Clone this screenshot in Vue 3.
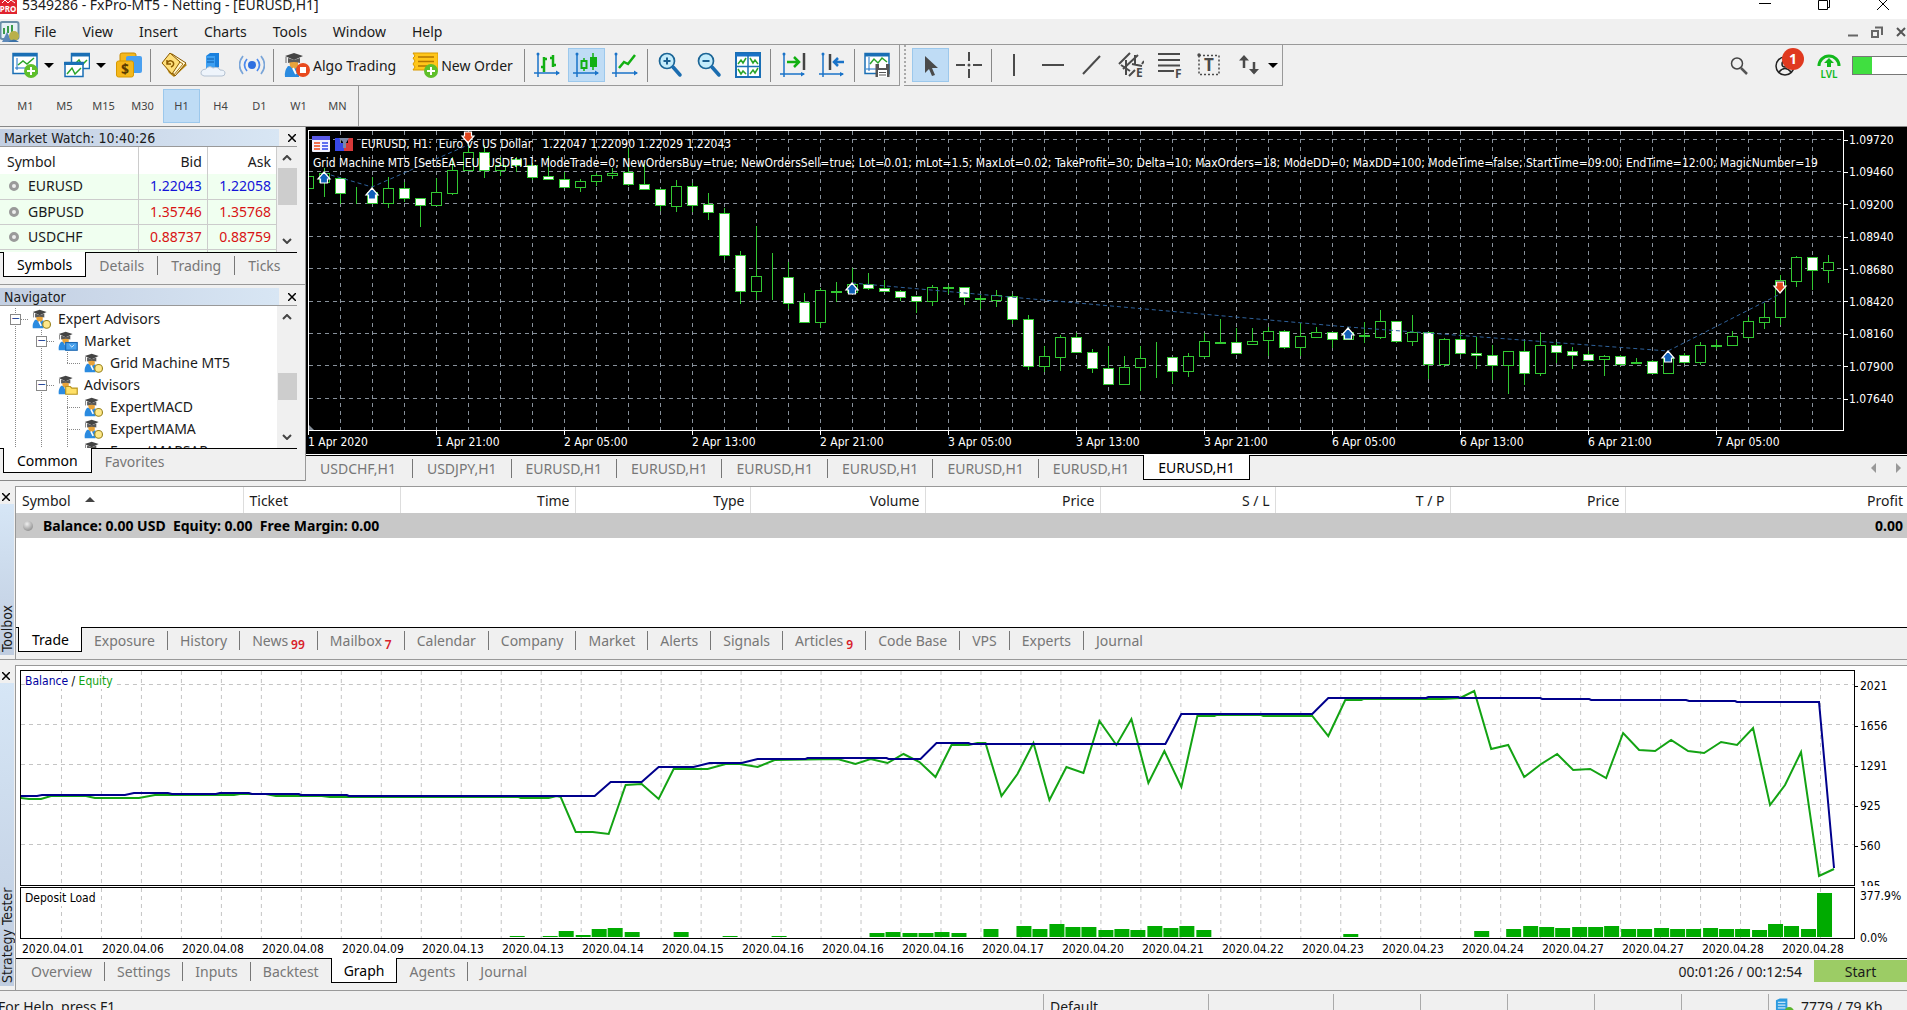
<script setup>
const menus = ['File', 'View', 'Insert', 'Charts', 'Tools', 'Window', 'Help']
const frames = ['M1', 'M5', 'M15', 'M30', 'H1', 'H4', 'D1', 'W1', 'MN']

const axes = '<path d="M4 1v24M0 21h25" stroke="#1a73c8" stroke-width="1.5"/><circle cx="4" cy="2" r="1.5" fill="#1a73c8"/><path d="M22 18.500l4 2.500-4 2.500z" fill="#1a73c8"/>'
const hat = '<path d="M4 14q-4 5-3 11h14V15z" fill="#2b8be0"/><path d="M5 8h9v6q-4 6-8 0z" fill="#e8a33a"/><path d="M1 4l9-3 9 3-9 4z" fill="#444"/><path d="M4 6v5q6-2 12 0V6l-6 2z" fill="#5a5a5a"/><path d="M2 5v6" stroke="#666"/><path d="M9 16l3 6" stroke="#fff" stroke-width="2"/>'
const plus = '<circle cx="19" cy="19" r="7" fill="#5fbf2a"/><path d="M19 15v8M15 19h8" stroke="#fff" stroke-width="2"/>'
const chartBox = '<path d="M1 1.500h24v20H1z" fill="#fff" stroke="#1a6fb5" stroke-width="1.500"/><path d="M1 3h24" stroke="#1a6fb5" stroke-width="3"/>'

const icons = {
  newChart: chartBox + '<path d="M5 6v12M3 16h16" stroke="#1a73c8"/><path d="M6 13l5-4 4 3 7-6" stroke="#2aa52a" stroke-width="1.500" fill="none"/>' + plus,
  windows: '<path d="M7.500 1.500h18v15h-18z" fill="#fff" stroke="#1a6fb5" stroke-width="1.500"/><path d="M7 3h19" stroke="#1a6fb5" stroke-width="3"/><path d="M10 13l5-5 3 5 5-5" stroke="#2aa52a" fill="none" stroke-width="1.500"/><path d="M1 10.500h18v14H1z" fill="#fff" stroke="#1a6fb5" stroke-width="1.500"/><path d="M0 11.500h20" stroke="#1a6fb5" stroke-width="3"/><path d="M3 22l5-6 3 6 6-6" stroke="#2aa52a" fill="none" stroke-width="1.500"/>',
  dollar: '<rect x="4" y="1" width="16" height="16" rx="2" fill="#f5b81c" stroke="#c98a00"/><rect x="10" y="4" width="16" height="17" rx="2" fill="#4aa0f0"/><rect x="0.500" y="9" width="17" height="16" rx="2" fill="#f5b81c" stroke="#d89a00"/><text x="9" y="22" font-size="14" font-weight="700" text-anchor="middle" fill="#5a3b00">$</text>',
  book: '<path d="M2 10L10 1l16 12-13 12L8 21z" fill="#b8860f"/><path d="M11 2l14 9-11 13-3-4z" fill="#fff6d0" stroke="#8a5a00"/><path d="M10 4l12 8-10 12" fill="none" stroke="#a87410"/><path d="M1 11L9 1l10 9-8 12z" fill="#ffdf7a" stroke="#8a5a00"/><path d="M6 11q3-4 6-1 2 3-2 5M6 8v4h4" fill="none" stroke="#8a5a00" stroke-width="1.500"/>',
  server: '<path d="M6 4l4-3h9v14l-4 3H6z" fill="#1a80dd"/><path d="M6 4h9v13H6z" fill="#3ea0f2"/><path d="M7 7h7M7 10h7" stroke="#0d5aa8"/><path d="M4 24q-4-1-3-4t5-3q3-4 7-1 5-2 7 2 5 0 5 3t-3 3z" fill="#eef4fb" stroke="#b4c2d2"/>',
  signal: '<circle cx="13" cy="13" r="4" fill="#2f6fe0"/><path d="M8 7q-5 6 0 12M18 7q5 6 0 12" fill="none" stroke="#4c8aee" stroke-width="1.700"/><path d="M4 4q-7 9 0 18M22 4q7 9 0 18" fill="none" stroke="#7aa5d8" stroke-width="1.700"/>',
  algo: hat + '<circle cx="19" cy="18" r="7" fill="#e8491d"/><rect x="16" y="15" width="6" height="6" fill="#fff"/>',
  order: '<path d="M1 1h25v17H1l2-3-2-3 2-3-2-3 2-2z" fill="#ffc61a" stroke="#d99a00"/><path d="M6 5h16M6 9.500h16M6 14h9" stroke="#b37500" stroke-width="1.500"/>' + plus,
  bars: axes + '<path d="M10 5v15M7 15h3M10 7h3M19 3v12M16 6h3M19 13h3" stroke="#12b012" stroke-width="2.500"/>',
  candles: axes + '<path d="M11 6v13M20 1v17" stroke="#12b012" stroke-width="1.500"/><rect x="8.500" y="9" width="5" height="7" fill="#bfdcf5" stroke="#12b012" stroke-width="2"/><rect x="17" y="5" width="7" height="10" fill="#12b012"/>',
  line: axes + '<path d="M7 16l5-6 4 2 7-9" fill="none" stroke="#12b012" stroke-width="2.500"/>',
  zoomIn: '<circle cx="10" cy="9" r="7.500" fill="#c4ecfb" stroke="#1b6596" stroke-width="1.700"/><path d="M10 5.500v7M6.500 9h7" stroke="#1b5f90" stroke-width="2"/><path d="M16 15l7 8" stroke="#1b6db0" stroke-width="3.500" stroke-linecap="round"/>',
  zoomOut: '<circle cx="10" cy="9" r="7.500" fill="#c4ecfb" stroke="#1b6596" stroke-width="1.700"/><path d="M6.500 9h7" stroke="#1b5f90" stroke-width="2"/><path d="M16 15l7 8" stroke="#1b6db0" stroke-width="3.500" stroke-linecap="round"/>',
  tile: '<path d="M1 1h24v24H1z" fill="#fff" stroke="#1a6fb5" stroke-width="2"/><path d="M1 3h24" stroke="#1a73c8" stroke-width="3"/><path d="M13 3v22M1 14.500h24" stroke="#1a6fb5" stroke-width="1.500"/><path d="M3 12l3-4 2 3 3-5M15 6l3 5 2-3 3 4M3 17l3 5 2-3 3 3M15 22l3-4 2 3 3-5" fill="none" stroke="#2aa52a" stroke-width="1.500"/>',
  scroll: '<path d="M4 1v24M0 22h24" stroke="#1a73c8" stroke-width="1.500"/><circle cx="4" cy="2" r="1.500" fill="#1a73c8"/><path d="M21 20l4 2-4 2.500z" fill="#1a73c8"/><path d="M24 1v17" stroke="#444" stroke-width="2.500"/><path d="M7 10h11M14 5l5 5-5 5" fill="none" stroke="#12b012" stroke-width="2.500"/>',
  shift: '<path d="M4 1v24M0 22h24" stroke="#1a73c8" stroke-width="1.500"/><circle cx="4" cy="2" r="1.500" fill="#1a73c8"/><path d="M21 20l4 2-4 2.500z" fill="#1a73c8"/><path d="M11 2v16" stroke="#444" stroke-width="2.500"/><path d="M25 10H16M19 6l-4 4 4 4" fill="none" stroke="#1a73c8" stroke-width="2.500"/>',
  template: chartBox + '<path d="M5 5v14M2 17h12" stroke="#1a73c8"/><path d="M6 12l4-5 4 4 4-5 5 4" fill="none" stroke="#2aa52a" stroke-width="1.500"/><path d="M11.500 12h14v13h-14z" fill="#555"/><path d="M15 12h7v4h-7z" fill="#fff"/><path d="M14 18h9v7h-9z" fill="#fff"/><path d="M15 20.500h7M15 23h7" stroke="#555"/>',
  cursor: '<path d="M8 4v17l4-4 3 7 3-1-3-7h6z" fill="#4a4a4a"/>',
  cross: '<path d="M13 0v9M13 17v9M0 13h9M17 13h9" stroke="#4a4a4a" stroke-width="2"/><circle cx="13" cy="13" r="1.500" fill="#4a4a4a"/>',
  vline: '<path d="M13 2v22" stroke="#4a4a4a" stroke-width="2"/>',
  hline: '<path d="M2 13h22" stroke="#4a4a4a" stroke-width="2"/>',
  trend: '<path d="M4 22L21 4" stroke="#4a4a4a" stroke-width="2"/>',
  channel: '<path d="M1 12L12 1M5 17L20 3M11 24l6-6M3 13l9 6M8 8v15M17 3v9M14 12l10 2M24 12l2-3" stroke="#4a4a4a" stroke-width="2" fill="none"/><text x="18" y="25" font-size="12" font-weight="700" fill="#4a4a4a">E</text>',
  fibo: '<path d="M1 2h22M1 8h22M1 13.500h22M1 19h16" stroke="#4a4a4a" stroke-width="2.200"/><text x="18" y="26" font-size="12" font-weight="700" fill="#4a4a4a">F</text>',
  label: '<path d="M3 3.500h20v19H3z" fill="none" stroke="#4a4a4a" stroke-width="1.500" stroke-dasharray="2 2"/><circle cx="3" cy="3" r="1.700" fill="#4a4a4a"/><text x="13" y="19" font-size="17" font-weight="700" text-anchor="middle" fill="#4a4a4a">T</text>',
  arrows: '<path d="M8 5v11M18 10v11" stroke="#4a4a4a" stroke-width="2.500"/><path d="M3 8.500l5-5.500 5 5.500zM13 17l5 5.500 5-5.500z" fill="#4a4a4a"/>',
  ea: hat + '<circle cx="19" cy="20" r="5" fill="#ffe98a" stroke="#9a8420" stroke-width="1.500"/>',
  market: hat + '<rect x="10" y="15" width="15" height="10" fill="#4aa3ee" stroke="#1a66b0" stroke-width="1.500"/><path d="M15 18l3 3 3-3" stroke="#fff" fill="none"/>',
  folder: hat + '<path d="M10 15h6l2 2h7v8H10z" fill="#ffe067" stroke="#b99520" stroke-width="1.500"/>'
}

const toolGroups = [
  [
    [{ n: 'newChart', drop: true, t: 'New chart' }, { n: 'windows', drop: true, t: 'Profiles' }, { n: 'dollar', t: 'Market watch' }],
    [{ n: 'book', t: 'Navigator' }, { n: 'server', t: 'VPS' }, { n: 'signal', t: 'Signals' }],
    [{ n: 'algo', text: 'Algo Trading' }, { n: 'order', text: 'New Order' }],
    [{ n: 'bars', t: 'Bars' }, { n: 'candles', on: true, t: 'Candles' }, { n: 'line', t: 'Line' }],
    [{ n: 'zoomIn', t: 'Zoom in' }, { n: 'zoomOut', t: 'Zoom out' }, { n: 'tile', t: 'Tile windows' }],
    [{ n: 'scroll', t: 'Auto scroll' }, { n: 'shift', t: 'Chart shift' }],
    [{ n: 'template', t: 'Templates' }]
  ],
  [
    [{ n: 'cursor', on: true, t: 'Cursor' }, { n: 'cross', t: 'Crosshair' }],
    [{ n: 'vline', t: 'Vertical line' }, { n: 'hline', t: 'Horizontal line' }, { n: 'trend', t: 'Trendline' }, { n: 'channel', t: 'Channel' }, { n: 'fibo', t: 'Fibonacci' }, { n: 'label', t: 'Text' }, { n: 'arrows', drop: true, t: 'Arrows' }]
  ]
]

const quotes = [
  { s: 'EURUSD', bid: '1.22043', ask: '1.22058', c: 'up' },
  { s: 'GBPUSD', bid: '1.35746', ask: '1.35768', c: 'down' },
  { s: 'USDCHF', bid: '0.88737', ask: '0.88759', c: 'down' }
]

const tree = [
  { guides: 0, icon: 'ea', text: 'Expert Advisors', box: true },
  { guides: 1, icon: 'market', text: 'Market', box: true },
  { guides: 3, icon: 'ea', text: 'Grid Machine MT5', last: true },
  { guides: 1, icon: 'folder', text: 'Advisors', box: true },
  { guides: 3, icon: 'ea', text: 'ExpertMACD' },
  { guides: 3, icon: 'ea', text: 'ExpertMAMA' },
  { guides: 3, icon: 'ea', text: 'ExpertMAPSAR' }
]

const makeTabs = (names, active) =>
  names.map((n, i) => {
    const [text, badge] = n.split('|')
    return { text, badge, on: i === active, sep: i !== active && i + 1 !== active && i < names.length - 1 }
  })
const watchTabs = makeTabs(['Symbols', 'Details', 'Trading', 'Ticks'], 0)
const navTabs = makeTabs(['Common', 'Favorites'], 0)
const chartTabs = makeTabs(['USDCHF,H1', 'USDJPY,H1', 'EURUSD,H1', 'EURUSD,H1', 'EURUSD,H1', 'EURUSD,H1', 'EURUSD,H1', 'EURUSD,H1', 'EURUSD,H1'], 8)
const toolboxTabs = makeTabs(['Trade', 'Exposure', 'History', 'News|99', 'Mailbox|7', 'Calendar', 'Company', 'Market', 'Alerts', 'Signals', 'Articles|9', 'Code Base', 'VPS', 'Experts', 'Journal'], 0)
const testerTabs = makeTabs(['Overview', 'Settings', 'Inputs', 'Backtest', 'Graph', 'Agents', 'Journal'], 4)

// High, body top, body bottom, low (three units per pixel, downwards); last value 1 = filled body
const candles = [
  [153, 153, 190, 190, 0], [130, 145, 170, 215, 0], [155, 160, 203, 238, 1], [186, 203, 203, 238, 0], [157, 200, 235, 238, 1],
  [157, 190, 235, 250, 0], [172, 190, 220, 232, 1], [220, 220, 241, 305, 1], [160, 202, 241, 241, 0], [97, 136, 203, 209, 0],
  [55, 82, 136, 138, 0], [60, 82, 136, 160, 1], [97, 121, 136, 152, 0], [97, 102, 121, 142, 1], [115, 121, 155, 165, 1],
  [93, 154, 163, 163, 1], [142, 163, 187, 187, 1], [163, 169, 187, 200, 0], [143, 151, 169, 184, 0], [128, 143, 151, 161, 0],
  [70, 142, 178, 182, 1], [118, 178, 192, 196, 1], [193, 193, 241, 258, 1], [166, 184, 244, 260, 0], [174, 184, 239, 262, 1],
  [205, 238, 262, 284, 1], [250, 265, 391, 406, 1], [379, 391, 497, 536, 1], [304, 454, 497, 526, 0], [384, 455, 457, 524, 0],
  [411, 457, 533, 551, 1], [504, 532, 590, 593, 1], [490, 496, 590, 610, 0], [470, 498, 501, 532, 0], [430, 478, 502, 508, 0],
  [445, 478, 490, 496, 1], [466, 490, 499, 502, 1], [495, 498, 515, 528, 1], [514, 514, 528, 563, 1], [480, 487, 529, 542, 0],
  [480, 485, 488, 508, 0], [485, 485, 517, 539, 1], [508, 518, 523, 551, 0], [496, 511, 524, 545, 0], [508, 512, 583, 598, 1],
  [571, 583, 724, 734, 1], [662, 694, 724, 742, 0], [631, 637, 695, 738, 0], [625, 637, 682, 685, 1], [673, 682, 730, 745, 1],
  [663, 730, 776, 776, 1], [694, 727, 776, 779, 0], [663, 698, 727, 797, 0], [652, 698, 698, 758, 0], [697, 697, 737, 776, 1],
  [685, 694, 737, 755, 0], [625, 649, 694, 700, 0], [582, 650, 653, 655, 0], [610, 652, 685, 688, 1], [609, 649, 658, 658, 0],
  [605, 619, 646, 692, 0], [616, 619, 667, 673, 1], [595, 634, 667, 692, 0], [606, 622, 635, 638, 0], [620, 622, 643, 670, 1],
  [605, 622, 643, 646, 0], [592, 631, 634, 655, 0], [556, 589, 635, 643, 0], [589, 589, 649, 655, 1], [570, 622, 649, 662, 0],
  [622, 622, 716, 761, 1], [640, 643, 716, 725, 0], [616, 643, 685, 690, 1], [636, 685, 691, 731, 1], [661, 691, 719, 765, 1],
  [679, 679, 719, 806, 0], [647, 679, 743, 779, 1], [621, 661, 743, 752, 0], [650, 661, 680, 713, 1], [667, 679, 689, 731, 1],
  [679, 688, 704, 706, 1], [691, 694, 703, 752, 0], [690, 694, 716, 722, 1], [700, 710, 715, 718, 0], [706, 709, 743, 743, 1],
  [690, 700, 743, 748, 0], [683, 691, 710, 718, 1], [652, 661, 710, 721, 0], [646, 659, 662, 672, 0], [619, 634, 659, 661, 0],
  [576, 589, 635, 643, 0], [533, 577, 590, 611, 0], [449, 466, 577, 601, 0], [394, 397, 467, 485, 0], [397, 397, 434, 494, 1],
  [391, 412, 434, 474, 0]
].map(([h, t, b, l, f], i) => {
  const y = v => Math.round(v / 3) - 5
  return { x: i * 16, h: y(h), t: y(t), b: y(b), l: y(l), f: !!f }
})
const markers = [
  { k: 1, y: 48, up: true }, { k: 4, y: 64, up: true }, { k: 10, y: 7, up: false }, { k: 34, y: 159, up: true },
  { k: 65, y: 204, up: true }, { k: 85, y: 227, up: true }, { k: 92, y: 157, up: false }
]
const gridY = [9, 41, 73, 106, 138, 171, 203, 235, 268]
const prices = ['1.09720', '1.09460', '1.09200', '1.08940', '1.08680', '1.08420', '1.08160', '1.07900', '1.07640']
const times = ['1 Apr 2020', '1 Apr 21:00', '2 Apr 05:00', '2 Apr 13:00', '2 Apr 21:00', '3 Apr 05:00', '3 Apr 13:00', '3 Apr 21:00', '6 Apr 05:00', '6 Apr 13:00', '6 Apr 21:00', '7 Apr 05:00']

const columns = ['Time', 'Type', 'Volume', 'Price', 'S / L', 'T / P', 'Price']

const balance = '20,796 37,796 42,795 125,795 134,793 168,793 172,794 216,794 220,793 249,793 252,794 299,794 301,795 347,795 349,796 595,796 611,782 642,782 659,767 694,767 710,763 742,763 758,759 806,759 808,758 887,758 889,759 921,759 937,743 969,743 971,744 1166,744 1182,714 1313,714 1329,698 1427,698 1429,697 1459,697 1461,698 1541,698 1543,699 1590,699 1592,700 1687,700 1690,701 1736,701 1738,702 1820,702 1835,868'
const equity = '20,798 29,799 41,799 51,796 86,796 95,798 139,798 155,795 234,795 240,794 266,794 276,796 298,796 322,796 330,797 519,797 521,798 549,798 557,796 561,797 576,832 593,832 609,834 626,785 642,784 659,799 674,769 690,769 708,769 726,764 740,764 758,767 775,760 838,759 856,764 871,759 888,763 904,754 920,762 936,777 952,745 969,745 978,743 986,743 1002,796 1018,774 1034,743 1050,800 1067,767 1084,773 1100,721 1117,745 1132,719 1149,783 1165,751 1182,787 1198,716 1215,716 1217,715 1262,715 1264,716 1313,716 1329,736 1346,700 1362,700 1364,699 1443,699 1461,698 1475,691 1492,749 1509,745 1525,777 1542,764 1558,754 1574,770 1591,769 1607,778 1624,733 1640,750 1656,751 1672,740 1689,751 1705,753 1722,742 1738,745 1754,728 1771,805 1786,785 1802,752 1820,876 1835,869'

const load = [
  [30, 1], [32, 1], [33, 6], [34, 2], [35, 8], [36, 9], [37, 5], [40, 5], [43, 1], [46, 1], [52, 4], [53, 5], [54, 4], [55, 4], [56, 5], [57, 4],
  [59, 8], [61, 11], [62, 8], [63, 13], [64, 10], [65, 10], [66, 7], [67, 8], [68, 7], [69, 11], [70, 9], [71, 11], [72, 7], [81, 3], [89, 6],
  [91, 8], [92, 11], [93, 10], [94, 9], [95, 10], [96, 10], [97, 11], [98, 8], [99, 8], [100, 9], [101, 8], [102, 8], [103, 9], [104, 8],
  [105, 8], [106, 7], [107, 13], [108, 11], [109, 8], [110, 44]
].map(([i, h]) => ({ x: 20 + Math.round(i * 16.345), h }))
const dates = ['01', '06', '08', '08', '09', '13', '13', '14', '15', '16', '16', '16', '17', '20', '21', '22', '23', '23', '24', '27', '27', '28', '28']
const levels = ['2021', '1656', '1291', '925', '560', '195']
</script>

<template>
  <div class="app">
    <header class="titlebar">
      <svg class="logo" viewBox="0 0 17 14"><path d="M0 0h17v14H0z" fill="#e0242f" /><path d="M2 3l3-3 3 3 3-3 4 3" stroke="#fff" fill="none" /><text x="8" y="12" font-size="8" font-weight="700" text-anchor="middle" fill="#fff">PRO</text></svg>
      <span class="title">5349286 - FxPro-MT5 - Netting - [EURUSD,H1]</span>
      <div class="winbtns">
        <button aria-label="Minimize"><svg viewBox="0 0 14 14"><path d="M1 3.500h12" stroke="#000" /></svg></button>
        <button aria-label="Restore"><svg viewBox="0 0 14 14"><path d="M1.500 0.500h9v9h-9z" fill="none" stroke="#000" /><path d="M12.500 0v7.500h-2" fill="none" stroke="#000" /></svg></button>
        <button aria-label="Close"><svg viewBox="0 0 14 14"><path d="M1 -2l12 12M13 -2L1 10" stroke="#000" /></svg></button>
      </div>
    </header>

    <nav class="menubar">
      <svg class="docicon" viewBox="0 0 20 22"><rect x="0.500" y="1" width="18" height="17" rx="2" fill="#e6f0f6" stroke="#6a8fa8" stroke-width="2" /><path d="M4 13V7M8 12V5M12 11V4" stroke="#3a9a4a" stroke-width="2" /><path d="M2 21l5-10 5 10z" fill="#5d88b8" /><circle cx="14" cy="15" r="5" fill="#b9b04a" /><path d="M8 21q6-5 11 0z" fill="#3b72a8" /></svg>
      <button v-for="m in menus" :key="m">{{ m }}</button>
      <div class="mdibtns">
        <svg viewBox="0 0 12 12"><path d="M1 9.500h10" stroke="#666" stroke-width="2" /></svg>
        <svg viewBox="0 0 12 12"><path d="M1 5h6v6H1zM4 1.500h7V9" fill="none" stroke="#666" stroke-width="2" /></svg>
        <svg viewBox="0 0 12 12"><path d="M2 2l8 8M10 2l-8 8" stroke="#555" stroke-width="2" /></svg>
      </div>
    </nav>

    <div class="toolrow">
      <div v-for="(g, gi) in toolGroups" :key="gi" class="toolbar" :class="{ grip: gi }">
        <template v-for="(set, si) in g" :key="si">
          <span v-if="si" class="tsep"></span>
          <button v-for="b in set" :key="b.n" class="tool" :class="{ on: b.on, drop: b.drop, wide: b.text }" :aria-label="b.t">
            <svg viewBox="0 0 26 26" v-html="icons[b.n]"></svg>
            <span v-if="b.text">{{ b.text }}</span>
            <i v-if="b.drop" class="caret"></i>
          </button>
        </template>
      </div>
      <div class="status-tools">
        <button aria-label="Search"><svg class="mag" viewBox="0 0 18 18"><circle cx="7" cy="6.500" r="5.500" fill="none" stroke="#444" stroke-width="1.500" /><path d="M11 11l6 6" stroke="#555" stroke-width="2.500" /></svg></button>
        <button class="user" aria-label="Account"><svg viewBox="0 0 20 20"><circle cx="10" cy="10" r="9" fill="none" stroke="#222" stroke-width="1.500" /><circle cx="10" cy="8" r="3" fill="none" stroke="#222" stroke-width="1.500" /><path d="M4 16q6-7 12 0" fill="none" stroke="#222" stroke-width="1.500" /></svg><b>1</b></button>
        <svg class="lvl" viewBox="0 0 24 24"><path d="M2 12a10 10 0 0 1 20 0" fill="none" stroke="#12b81c" stroke-width="3" /><path d="M12 4l5 5h-3v4h-4V9H7z" fill="#12b81c" /><text x="12" y="24" font-size="10" font-weight="600" text-anchor="middle" fill="#12b81c">LVL</text></svg>
        <div class="meter"><div></div></div>
      </div>
    </div>

    <div class="frames">
      <div class="framebar">
        <button v-for="f in frames" :key="f" :class="{ on: f === 'H1' }">{{ f }}</button>
      </div>
    </div>

    <main class="workspace">
      <aside class="side">
        <section class="panel">
          <h2 class="ptitle"><span>Market Watch: 10:40:26</span><button aria-label="Close"><svg viewBox="0 0 8 8"><path d="M0 0l8 8M8 0L0 8" stroke="#000" stroke-width="1.500" /></svg></button></h2>
          <div class="pbody watch">
            <table class="quotes">
              <thead><tr><th>Symbol</th><th>Bid</th><th>Ask</th></tr></thead>
              <tbody>
                <tr v-for="q in quotes" :key="q.s"><td><i class="dot"></i>{{ q.s }}</td><td :class="q.c">{{ q.bid }}</td><td :class="q.c">{{ q.ask }}</td></tr>
                <tr><td></td><td></td><td></td></tr>
              </tbody>
            </table>
            <div class="scroll">
              <svg viewBox="0 0 10 6"><path d="M1 5l4-4 4 4" /></svg><i class="thumb w"></i><svg class="end" viewBox="0 0 10 6"><path d="M1 1l4 4 4-4" /></svg>
            </div>
          </div>
          <div class="tabs">
            <template v-for="t in watchTabs" :key="t.text"><button class="tab" :class="{ on: t.on }">{{ t.text }}</button><i v-if="t.sep" class="sep"></i></template>
          </div>
        </section>
        <section class="panel">
          <h2 class="ptitle"><span>Navigator</span><button aria-label="Close"><svg viewBox="0 0 8 8"><path d="M0 0l8 8M8 0L0 8" stroke="#000" stroke-width="1.500" /></svg></button></h2>
          <div class="pbody nav">
            <ul class="tree">
              <li v-for="n in tree" :key="n.text">
                <i v-for="k in n.guides" :key="k" class="guide" :class="{ half: n.last && k === 3, link: k === 3 }"></i>
                <i v-if="n.box" class="guide box"><b>−</b></i>
                <svg viewBox="0 0 26 26" v-html="icons[n.icon]"></svg><span>{{ n.text }}</span>
              </li>
            </ul>
            <div class="scroll">
              <svg viewBox="0 0 10 6"><path d="M1 5l4-4 4 4" /></svg><i class="thumb n"></i><svg class="end" viewBox="0 0 10 6"><path d="M1 1l4 4 4-4" /></svg>
            </div>
          </div>
          <div class="tabs">
            <template v-for="t in navTabs" :key="t.text"><button class="tab" :class="{ on: t.on }">{{ t.text }}</button><i v-if="t.sep" class="sep"></i></template>
          </div>
        </section>
      </aside>

      <section class="chartcol">
        <div class="chart">
          <div class="plot">
            <svg class="plotsvg" viewBox="1 1 1534 299" preserveAspectRatio="none">
              <g stroke="#87909a" stroke-dasharray="4 4" shape-rendering="crispEdges">
                <line v-for="i in 47" :key="'v' + i" :x1="i * 32 + 0.5" :x2="i * 32 + 0.5" y1="1" y2="300" />
                <line v-for="y in gridY" :key="'h' + y" x1="1" x2="1536" :y1="y + 0.5" :y2="y + 0.5" />
              </g>
              <g stroke="#32c832" shape-rendering="crispEdges">
                <template v-for="c in candles" :key="c.x">
                  <line :x1="c.x + 0.5" :x2="c.x + 0.5" :y1="c.h" :y2="c.l" />
                  <rect :x="c.x - 4.5" :y="c.t + 0.5" width="10" :height="c.b - c.t" :fill="c.f ? '#fff' : '#000'" />
                </template>
              </g>
              <path d="M16 43L64 57L160 15M544 153L1040 197L1360 221L1472 164" fill="none" stroke="#2f629c" stroke-dasharray="4 3" />
              <path d="M1 295l5 5h-5z" fill="#87909a" />
              <g v-for="m in markers" :key="m.k" :transform="`translate(${m.k * 16} ${m.y}) scale(1 ${m.up ? 1 : -1})`">
                <path d="M0-6L6 1H3.500V5h-7V1H-6z" :fill="m.up ? '#0f5fb8' : '#e0441c'" stroke="#fff" stroke-width="1.200" />
              </g>
            </svg>
            <div class="legend">
              <svg viewBox="0 0 18 16"><rect width="18" height="16" rx="1" fill="#f3f3ff" /><path d="M0 2h18" stroke="#5a5ae8" stroke-width="4" /><path d="M2 7h6M2 10h6M2 13h6" stroke="#f07050" stroke-width="2" /><path d="M10 7h6M10 10h6M10 13h6" stroke="#6070f0" stroke-width="2" /></svg>
              <svg viewBox="0 0 18 16"><path d="M0 2h5v5h4v8H0z" fill="#3848e8" /><path d="M18 2h-5v5H9v8h9z" fill="#d83a3a" /><path d="M4 2h10l-3 5v5H8V6z" fill="#7a88a8" /></svg>
              <span>EURUSD, H1:&nbsp; Euro vs US Dollar&nbsp;&nbsp; 1.22047 1.22090 1.22029 1.22043</span>
            </div>
            <div class="comment">Grid Machine MT5 [SetsEA=EURUSD[H1]; ModeTrade=0; NewOrdersBuy=true; NewOrdersSell=true; Lot=0.01; mLot=1.5; MaxLot=0.02; TakeProfit=30; Delta=10; MaxOrders=18; ModeDD=0; MaxDD=100; ModeTime=false; StartTime=09:00; EndTime=12:00; MagicNumber=19</div>
          </div>
          <div class="prices"><span v-for="p in prices" :key="p">{{ p }}</span></div>
          <div class="times"><span v-for="t in times" :key="t">{{ t }}</span></div>
        </div>
        <div class="tabs chart-tabs">
          <template v-for="(t, i) in chartTabs" :key="i"><button class="tab" :class="{ on: t.on }">{{ t.text }}</button><i v-if="t.sep" class="sep"></i></template>
          <div class="pager"><button aria-label="Previous tabs"></button><button class="next" aria-label="Next tabs"></button></div>
        </div>
      </section>
    </main>

    <section class="dock">
      <div class="rail"><button aria-label="Close"><svg viewBox="0 0 8 8"><path d="M0 0l8 8M8 0L0 8" stroke="#000" stroke-width="1.500" /></svg></button><span>Toolbox</span></div>
      <div class="dockmain">
        <div class="toolbox">
          <table class="trades">
            <colgroup><col class="c-sym"><col class="c-tick"><col v-for="i in 7" :key="i" class="c-num"><col></colgroup>
            <thead><tr><th class="l">Symbol <i class="asc"></i></th><th class="l">Ticket</th><th v-for="(c, i) in columns" :key="i">{{ c }}</th><th>Profit</th></tr></thead>
            <tbody><tr><td colspan="9"><i class="ball"></i>Balance: 0.00 USD&nbsp; Equity: 0.00&nbsp; Free Margin: 0.00</td><td class="r">0.00</td></tr></tbody>
          </table>
        </div>
        <div class="tabs">
          <template v-for="t in toolboxTabs" :key="t.text"><button class="tab" :class="{ on: t.on }">{{ t.text }}<sub v-if="t.badge">{{ t.badge }}</sub></button><i v-if="t.sep" class="sep"></i></template>
        </div>
      </div>
    </section>

    <section class="dock tester">
      <div class="rail"><button aria-label="Close"><svg viewBox="0 0 8 8"><path d="M0 0l8 8M8 0L0 8" stroke="#000" stroke-width="1.500" /></svg></button><span>Strategy Tester</span></div>
      <div class="dockmain">
        <div class="graph">
          <div class="gbox">
            <svg class="g1" viewBox="21 671 1834 214" preserveAspectRatio="none">
              <g stroke="#c4c4c4" stroke-dasharray="4 4" shape-rendering="crispEdges">
                <line v-for="i in 45" :key="'v' + i" :x1="21.5 + i * 40" :x2="21.5 + i * 40" y1="671" y2="885" />
                <line v-for="i in 5" :key="'h' + i" x1="21" x2="1855" :y1="644.5 + i * 40" :y2="644.5 + i * 40" />
              </g>
              <g fill="none" stroke-width="2"><polyline :points="equity" stroke="#13a313" /><polyline :points="balance" stroke="#00008c" /></g>
            </svg>
            <p class="glabel"><span class="b">Balance</span> / <span class="e">Equity</span></p>
          </div>
          <div class="levels"><span v-for="l in levels" :key="l">{{ l }}</span></div>
          <div class="gbox">
            <svg class="g2" viewBox="21 888 1834 50" preserveAspectRatio="none">
              <g stroke="#c4c4c4" stroke-dasharray="4 4" shape-rendering="crispEdges">
                <line v-for="i in 45" :key="'v' + i" :x1="21.5 + i * 40" :x2="21.5 + i * 40" y1="888" y2="938" />
              </g>
              <rect v-for="b in load" :key="b.x" :x="b.x" :y="937 - b.h" width="15" :height="b.h" fill="#00ab00" />
            </svg>
            <p class="glabel">Deposit Load</p>
          </div>
          <div class="pct"><span>377.9%</span><span>0.0%</span></div>
          <div class="dates"><span v-for="(d, i) in dates" :key="i">2020.04.{{ d }}</span></div>
        </div>
        <div class="tabs">
          <template v-for="t in testerTabs" :key="t.text"><button class="tab" :class="{ on: t.on }">{{ t.text }}</button><i v-if="t.sep" class="sep"></i></template>
          <span class="clock">00:01:26 / 00:12:54</span>
          <button class="start">Start</button>
        </div>
      </div>
    </section>

    <footer class="statusbar">
      <span class="help">For Help, press F1</span>
      <span class="cell s1">Default</span><span class="cell s2"></span><span class="cell s3"></span><span class="cell s3"></span><span class="cell s3"></span><span class="cell s3"></span><span class="cell s3"></span>
      <span class="cell s4"><svg viewBox="0 0 20 20"><path d="M1 3l4-2h8v17H1z" fill="#2c9be0" /><path d="M3 5h8M3 8h8M3 11h8" stroke="#fff" /><circle cx="15" cy="15" r="5" fill="#5ab52e" /></svg>7779 / 79 Kb</span>
    </footer>
  </div>
</template>

<style>
body { margin: 0; background: #f0f0f0; }
</style>

<style scoped>
.app { height: 100vh; overflow: hidden; display: flex; flex-direction: column; background: #f0f0f0; color: #1a1a1a; font: 14px/20px "Noto Sans", "Open Sans", sans-serif; }
.app > * { flex: none; }
.app * { box-sizing: border-box; }
button { font: inherit; color: inherit; background: none; border: 0; padding: 0; margin: 0; }
svg { display: block; }

.titlebar { height: 19px; background: #fff; display: flex; line-height: 10px; }
.logo { width: 17px; height: 14px; margin-right: 5px; }
.title { flex: 1; white-space: nowrap; }
.winbtns { display: flex; align-items: flex-start; gap: 45px; padding-right: 17px; }
.winbtns svg { width: 14px; height: 14px; }

.menubar { height: 26px; display: flex; align-items: center; border-bottom: 1px solid #999; }
.menubar button { padding: 0 13px; height: 24px; }
.docicon { width: 20px; height: 22px; margin-right: 1px; }
.mdibtns { margin-left: auto; display: flex; gap: 12px; }
.mdibtns svg { width: 12px; height: 12px; }

.toolrow { height: 41px; display: flex; }
.toolbar { display: flex; align-items: center; gap: 2px; padding: 0 3px 0 6px; border-bottom: 1px solid #999; border-right: 1px solid #999; }
.toolbar.grip { padding: 0 2px 0 8px; margin-left: 4px; background: repeating-linear-gradient(#aaa 0 2px, transparent 2px 4px) 0 0 / 2px 100% no-repeat; }
.tool { width: 37px; height: 34px; display: flex; align-items: center; justify-content: center; white-space: nowrap; }
.tool svg { width: 26px; height: 26px; flex: none; font-family: "Open Sans", sans-serif; }
.tool.on { background: #bfdcf5; box-shadow: inset 0 0 0 1px #9cc8ec; }
.tool.drop { width: 50px; justify-content: flex-start; padding-left: 6px; gap: 6px; }
.tool.wide { width: auto; padding: 0 8px 0 6px; gap: 3px; }
.tool.wide span { padding-top: 2px; }
.caret { border: 5px solid transparent; border-top-color: #000; border-bottom: 0; }
.tsep { width: 1px; height: 33px; background: #888; margin: 0 2px 0 1px; }
.status-tools { margin-left: auto; display: flex; align-items: center; }
.mag { width: 18px; height: 18px; margin-right: 27px; }
.user { position: relative; width: 20px; height: 20px; margin-right: 22px; }
.user svg { width: 20px; height: 20px; }
.user b { position: absolute; left: 7px; top: -8px; width: 22px; height: 22px; border-radius: 11px; background: #e0391f; color: #fff; line-height: 22px; }
.lvl { width: 24px; height: 24px; margin-right: 11px; }
.meter { width: 55px; height: 19px; border: 1px solid #777; border-right: 0; background: #fff; }
.meter div { width: 19px; height: 100%; background: #40df40; }

.frames { height: 41px; border-bottom: 1px solid #888; }
.framebar { display: inline-flex; align-items: center; gap: 2px; height: 40px; padding: 0 2px 0 7px; border-right: 1px solid #999; font-size: 11px; color: #444; }
.framebar button { width: 37px; height: 34px; }
.framebar .on { background: #bfdcf5; box-shadow: inset 0 0 0 1px #9cc8ec; }

.workspace { display: flex; height: 354px; }
.side { width: 306px; flex: none; border-right: 1px solid #999; border-bottom: 1px solid #888; }
.panel { padding: 2px 8px 7px 0; }
.panel + .panel { border-top: 1px solid #999; padding: 3px 8px 0 0; }
.ptitle { margin: 0; height: 18px; display: flex; font: 14px/18px "DejaVu Sans Condensed", "DejaVu Sans", sans-serif; border-bottom: 1px solid #999; }
.ptitle span { flex: 1; padding-left: 4px; background: linear-gradient(90deg, #c3cfe2, #d8e6f4); }
.ptitle button { width: 18px; padding-left: 9px; }
.ptitle svg, .rail svg { width: 8px; height: 8px; }
.pbody { display: flex; background: #fff; overflow: hidden; }
.watch { height: 105px; }
.nav { height: 142px; }
.quotes { flex: 1; border-collapse: collapse; table-layout: fixed; }
.quotes th, .quotes td { padding: 0 5px; height: 25px; font-weight: 400; text-align: right; border-right: 1px solid #ccc; border-bottom: 1px solid #ccc; line-height: 20px; }
.quotes th { height: 27px; border-bottom: 0; padding-top: 2px; }
.quotes td { background: #f0fff0; }
.quotes th:first-child, .quotes td:first-child { width: 138px; text-align: left; padding-left: 7px; }
.quotes td:first-child { padding-left: 9px; }
.dot { display: inline-block; width: 10px; height: 10px; border: 3px solid #9a9a9a; border-radius: 5px; background: #eee; margin-right: 9px; }
.up { color: #1414d8; }
.down { color: #d81414; }
.scroll { width: 20px; flex: none; background: #f0f0f0; display: flex; flex-direction: column; align-items: center; padding: 8px 0; }
.scroll svg { width: 10px; height: 6px; fill: none; stroke: #444; stroke-width: 2; }
.scroll .end { margin-top: auto; }
.thumb { width: 19px; background: #cdcdcd; margin-top: 7px; height: 37px; }
.thumb.n { margin-top: 53px; height: 27px; }

.tabs { display: flex; align-items: center; height: 25px; border-top: 1px solid #000; padding-left: 3px; color: #777; }
.tab { align-self: stretch; padding: 2px 13px 0; white-space: nowrap; }
.tab.on { margin-top: -1px; background: #fff; color: #000; border: 1px solid #000; border-top: 0; padding: 2px 13px 0; }
.sep { width: 1px; height: 19px; background: #777; }
.tab sub { color: #d8202a; font-size: 12px; font-weight: 600; line-height: 12px; margin-left: 3px; vertical-align: -3px; }

.tree { flex: 1; margin: 0; padding: 2px 0 0 2px; list-style: none; white-space: nowrap; }
.tree li { display: flex; height: 22px; align-items: center; }
.tree li > svg { width: 20px; height: 20px; margin: 0 6px 0 4px; flex: none; }
.guide { width: 26px; height: 22px; flex: none; display: flex; align-items: center; padding-left: 8px; background: repeating-linear-gradient(#888 0 1px, transparent 1px 2px) 13px 0 / 1px 100% no-repeat; }
.guide.half { background-size: 1px 50%; }
.guide.link::after { content: ""; margin-left: 5px; width: 13px; border-top: 1px dotted #888; }
.guide.box::after { content: ""; width: 7px; border-top: 1px dotted #888; }
.guide b { width: 11px; height: 11px; border: 1px solid #888; background: #fff; font: 11px/8px "DejaVu Sans", sans-serif; color: #2a4a9a; text-align: center; }

.chartcol { flex: 1; min-width: 0; }
.chart { display: grid; grid-template-columns: 1fr 63px; background: #000; padding: 3px 0 0 2px; height: 328px; border-bottom: 1px solid #fff; color: #fff; font: 12px/16px "DejaVu Sans Condensed", "DejaVu Sans", sans-serif; grid-template-rows: 301px 24px; }
.plot { position: relative; border: 1px solid #fff; overflow: hidden; }
.plotsvg { width: 100%; height: 299px; }
.legend { position: absolute; left: 3px; top: 4px; display: flex; align-items: center; gap: 5px; white-space: pre; }
.legend svg { width: 18px; height: 16px; }
.legend span { padding: 1px 0 0 3px; }
.comment { position: absolute; left: 4px; top: 24px; white-space: nowrap; }
.prices { display: flex; flex-direction: column; justify-content: space-between; padding: 2px 0 24px; }
.prices span { padding-left: 5px; background: linear-gradient(#fff, #fff) 0 50% / 4px 1px no-repeat; }
.times { display: grid; grid-template-columns: repeat(12, 1fr); }
.times span { padding-top: 3px; background: linear-gradient(#fff, #fff) 0 0 / 1px 4px no-repeat; }
.chart-tabs { padding-left: 0; }
.chart-tabs .tab { padding: 2px 14px 0; }
.chart-tabs .tab:first-child { padding-right: 16px; }
.pager { margin-left: auto; display: flex; gap: 20px; padding-right: 6px; }
.pager button { border: 5px solid transparent; border-right-color: #999; border-left: 0; }
.pager .next { border: 5px solid transparent; border-left-color: #999; border-right: 0; }

.dock { display: flex; padding-top: 5px; height: 179px; border-bottom: 1px solid #999; }
.tester { height: 331px; }
.rail { width: 15px; display: flex; flex-direction: column; justify-content: space-between; padding-bottom: 4px; }
.rail button { height: 18px; padding: 3px 0 0 2px; }
.rail span { flex: 1; width: 14px; writing-mode: vertical-rl; transform: rotate(180deg); font: 14px/14px "DejaVu Sans Condensed", "DejaVu Sans", sans-serif; background: linear-gradient(#c0cde0, #d6e6f6); padding-top: 3px; }
.dockmain { flex: 1; min-width: 0; border: 1px solid #999; border-width: 1px 0 0 1px; }
.dockmain > .tabs { padding-left: 2px; }
.dockmain .tab { padding: 2px 12px 0; }
.dockmain .tab:first-child { padding-left: 13px; }
.toolbox { height: 140px; background: #fff; }
.trades { width: 100%; border-collapse: collapse; table-layout: fixed; }
.trades th { height: 26px; padding: 2px 5px 0; font-weight: 400; text-align: right; border-right: 1px solid #ddd; }
.trades th.l { text-align: left; padding-left: 6px; }
.trades th:last-child { border: 0; padding-right: 4px; }
.trades td { height: 25px; padding: 1px 4px 0 7px; background: #c8c8c8; font-weight: 700; color: #000; }
.trades td.r { text-align: right; }
.c-sym { width: 227px; }
.c-tick { width: 157px; }
.c-num { width: 175px; }
.asc { display: inline-block; border: 5px solid transparent; border-bottom-color: #444; border-top: 0; margin: 0 0 4px 11px; }
.ball { display: inline-block; width: 10px; height: 10px; border-radius: 5px; background: radial-gradient(circle at 4px 3px, #eee, #777); margin-right: 10px; }

.graph { height: 292px; background: #fff; padding: 4px 0 0 4px; display: grid; grid-template-columns: minmax(0, 1fr) 52px; grid-template-rows: 216px 1px 52px 19px; color: #000; font: 12px/16px "DejaVu Sans Condensed", "DejaVu Sans", sans-serif; }
.gbox { position: relative; border: 1px solid #000; }
.gbox:nth-of-type(3) { grid-row: 3; }
.g1 { width: 100%; height: 214px; }
.g2 { width: 100%; height: 50px; }
.glabel { position: absolute; left: 4px; top: 2px; margin: 0; background: #fff; }
.b { color: #0000a0; }
.e { color: #13a313; }
.levels { display: flex; flex-direction: column; gap: 24px; padding-top: 8px; overflow: hidden; }
.levels span, .pct span { padding-left: 5px; }
.levels span { background: linear-gradient(#000, #000) 0 50% / 3px 1px no-repeat; }
.pct { grid-row: 3 / 5; grid-column: 2; display: flex; flex-direction: column; gap: 26px; padding-top: 1px; }
.dates { grid-row: 4; grid-column: 1; display: grid; grid-template-columns: repeat(23, 80px); padding: 2px 0 0 1px; }
.dates span { padding-left: 1px; white-space: nowrap; }
.clock { margin-left: auto; margin-right: 12px; padding-top: 2px; color: #1a1a1a; }
.start { width: 93px; height: 22px; padding-top: 1px; background: #9ccc65; color: #1a1a1a; }

.statusbar { height: 30px; display: flex; align-items: center; }
.help { flex: 1; margin-left: -2px; padding-top: 1px; }
.cell { height: 24px; border-left: 1px solid #aaa; padding: 1px 0 0 6px; line-height: 24px; display: flex; align-items: center; gap: 7px; white-space: nowrap; }
.cell svg { width: 19px; height: 20px; }
.s1 { width: 165px; }
.s2 { width: 125px; }
.s3 { width: 87px; }
.s4 { width: 139px; }
</style>
